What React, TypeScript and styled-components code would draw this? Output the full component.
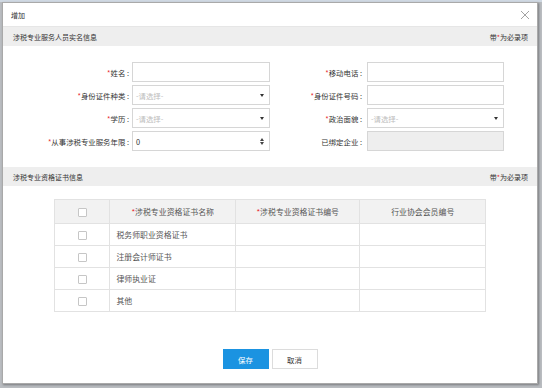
import { Fragment } from "react";
import styled, { createGlobalStyle } from "styled-components";

const GlobalStyle = createGlobalStyle`
  html, body {
    margin: 0;
    padding: 0;
    background: #b9bcc0;
  }
  body {
    font-family: "Noto Sans CJK SC", "Noto Sans", sans-serif;
    color: #333;
  }
`;

const Page = styled.div`
  width: 542px;
  height: 388px;
  padding: 2px 0 0 2px;
  box-sizing: border-box;
  background: linear-gradient(#cfd8e2 0 2px, #b9bcc0 2px);
`;

const Dialog = styled.div`
  width: 536px;
  height: 382px;
  background: #fff;
  border: 1px solid #a9a9a9;
  box-sizing: border-box;
  box-shadow: 1px 1px 2px rgba(0, 0, 0, 0.35);
  display: flex;
  flex-direction: column;
`;

const TitleBar = styled.div`
  height: 23px;
  display: flex;
  align-items: center;
  justify-content: space-between;
  padding: 0 6px 0 8px;
  font-size: 7px;
  border-bottom: 1px solid #e6e6e6;
`;

const CloseButton = styled.button`
  border: none;
  background: none;
  padding: 0;
  width: 12px;
  height: 12px;
  display: flex;
  align-items: center;
  justify-content: center;
  cursor: pointer;
`;

const SectionBar = styled.div`
  height: 19px;
  background: #eeeeee;
  display: flex;
  align-items: center;
  justify-content: space-between;
  padding: 0 9px 0 10px;
  font-size: 7px;
  color: #333;
`;

const Star = styled.span`
  color: #e8262b;
`;

const FormGrid = styled.div`
  display: grid;
  grid-template-columns: 129px 138px 97px 137px;
  grid-auto-rows: 20px;
  row-gap: 3px;
  padding: 16px 0 16px 0;
`;

const Label = styled.label<{ $right?: boolean }>`
  display: flex;
  align-items: center;
  justify-content: flex-end;
  padding-right: ${(p) => (p.$right ? "5px" : "3px")};
  font-size: 7.4px;
  color: #333;
  white-space: nowrap;
`;

const Field = styled.div<{ $disabled?: boolean }>`
  border: 1px solid #d6d6d6;
  background: ${(p) => (p.$disabled ? "#eeeeee" : "#fff")};
  box-sizing: border-box;
  display: flex;
  align-items: center;
  justify-content: space-between;
  padding: 0 5px 0 3px;
  font-size: 7.4px;
`;

const Placeholder = styled.span`
  color: #bdbdbd;
`;

const Value = styled.span`
  color: #333;
`;

const Caret = styled.span`
  width: 0;
  height: 0;
  border-left: 2.5px solid transparent;
  border-right: 2.5px solid transparent;
  border-top: 3px solid #333;
`;

const Spinner = styled.span`
  display: flex;
  flex-direction: column;
  gap: 1px;
`;

const SpinUp = styled.span`
  width: 0;
  height: 0;
  border-left: 2px solid transparent;
  border-right: 2px solid transparent;
  border-bottom: 3px solid #444;
`;

const SpinDown = styled(SpinUp)`
  border-bottom: none;
  border-top: 3px solid #444;
`;

const TableWrap = styled.div`
  display: flex;
  justify-content: center;
  padding-top: 13px;
`;

const Table = styled.table`
  width: 432px;
  border-collapse: collapse;
  border: 1px solid #e2e2e2;
  font-size: 7.9px;
  color: #555;
`;

const HeadCell = styled.th<{ $w: number }>`
  width: ${(p) => p.$w}px;
  height: 23px;
  background: #f2f2f2;
  border: 1px solid #e2e2e2;
  font-weight: normal;
  text-align: center;
  padding: 0;
`;

const Cell = styled.td<{ $center?: boolean }>`
  height: 21px;
  border: 1px solid #e2e2e2;
  padding: 0 0 0 6px;
  text-align: ${(p) => (p.$center ? "center" : "left")};
  ${(p) => (p.$center ? "padding: 0;" : "")}
`;

const Check = styled.span`
  display: inline-block;
  width: 7px;
  height: 7px;
  border: 1px solid #c6c6c6;
  border-radius: 1px;
  background: #fff;
  vertical-align: middle;
`;

const Footer = styled.div`
  margin-top: auto;
  display: flex;
  justify-content: center;
  gap: 3px;
  padding-bottom: 14px;
`;

const Btn = styled.button<{ $primary?: boolean }>`
  width: 46px;
  height: 20px;
  font-family: inherit;
  font-size: 7.4px;
  border: 1px solid ${(p) => (p.$primary ? "#1b93e1" : "#dcdcdc")};
  background: ${(p) => (p.$primary ? "#1b93e1" : "#fff")};
  color: ${(p) => (p.$primary ? "#fff" : "#333")};
  padding: 0;
  cursor: pointer;
`;

type Row = {
  label: string;
  required?: boolean;
  kind: "text" | "select" | "number" | "disabled";
  value?: string;
};

const leftRows: Row[] = [
  { label: "姓名", required: true, kind: "text" },
  { label: "身份证件种类", required: true, kind: "select" },
  { label: "学历", required: true, kind: "select" },
  { label: "从事涉税专业服务年限", required: true, kind: "number", value: "0" },
];

const rightRows: Row[] = [
  { label: "移动电话", required: true, kind: "text" },
  { label: "身份证件号码", required: true, kind: "text" },
  { label: "政治面貌", required: true, kind: "select" },
  { label: "已绑定企业", kind: "disabled" },
];

const certs = ["税务师职业资格证书", "注册会计师证书", "律师执业证", "其他"];

function FieldBox({ row }: { row: Row }) {
  if (row.kind === "select") {
    return (
      <Field>
        <Placeholder>-请选择-</Placeholder>
        <Caret />
      </Field>
    );
  }
  if (row.kind === "number") {
    return (
      <Field>
        <Value>{row.value}</Value>
        <Spinner>
          <SpinUp />
          <SpinDown />
        </Spinner>
      </Field>
    );
  }
  return <Field $disabled={row.kind === "disabled"} />;
}

export default function App() {
  return (
    <Page>
      <GlobalStyle />
      <Dialog>
        <TitleBar>
          <span>增加</span>
          <CloseButton title="close">
            <svg width="10" height="10" viewBox="0 0 10 10">
              <path d="M1 1 L9 9 M9 1 L1 9" stroke="#999" strokeWidth="0.9" />
            </svg>
          </CloseButton>
        </TitleBar>
        <SectionBar>
          <span>涉税专业服务人员实名信息</span>
          <span>
            带<Star>*</Star>为必录项
          </span>
        </SectionBar>
        <FormGrid>
          {leftRows.map((row, i) => (
            <Fragment key={row.label}>
              <Label>
                {row.required && <Star>*</Star>}
                {row.label} :
              </Label>
              <FieldBox row={row} />
              <Label $right>
                {rightRows[i].required && <Star>*</Star>}
                {rightRows[i].label} :
              </Label>
              <FieldBox row={rightRows[i]} />
            </Fragment>
          ))}
        </FormGrid>
        <SectionBar>
          <span>涉税专业资格证书信息</span>
          <span>
            带<Star>*</Star>为必录项
          </span>
        </SectionBar>
        <TableWrap>
          <Table>
            <thead>
              <tr>
                <HeadCell $w={55}>
                  <Check />
                </HeadCell>
                <HeadCell $w={126}>
                  <Star>*</Star>涉税专业资格证书名称
                </HeadCell>
                <HeadCell $w={125}>
                  <Star>*</Star>涉税专业资格证书编号
                </HeadCell>
                <HeadCell $w={126}>行业协会会员编号</HeadCell>
              </tr>
            </thead>
            <tbody>
              {certs.map((c) => (
                <tr key={c}>
                  <Cell $center>
                    <Check />
                  </Cell>
                  <Cell>{c}</Cell>
                  <Cell />
                  <Cell />
                </tr>
              ))}
            </tbody>
          </Table>
        </TableWrap>
        <Footer>
          <Btn $primary>保存</Btn>
          <Btn>取消</Btn>
        </Footer>
      </Dialog>
    </Page>
  );
}
